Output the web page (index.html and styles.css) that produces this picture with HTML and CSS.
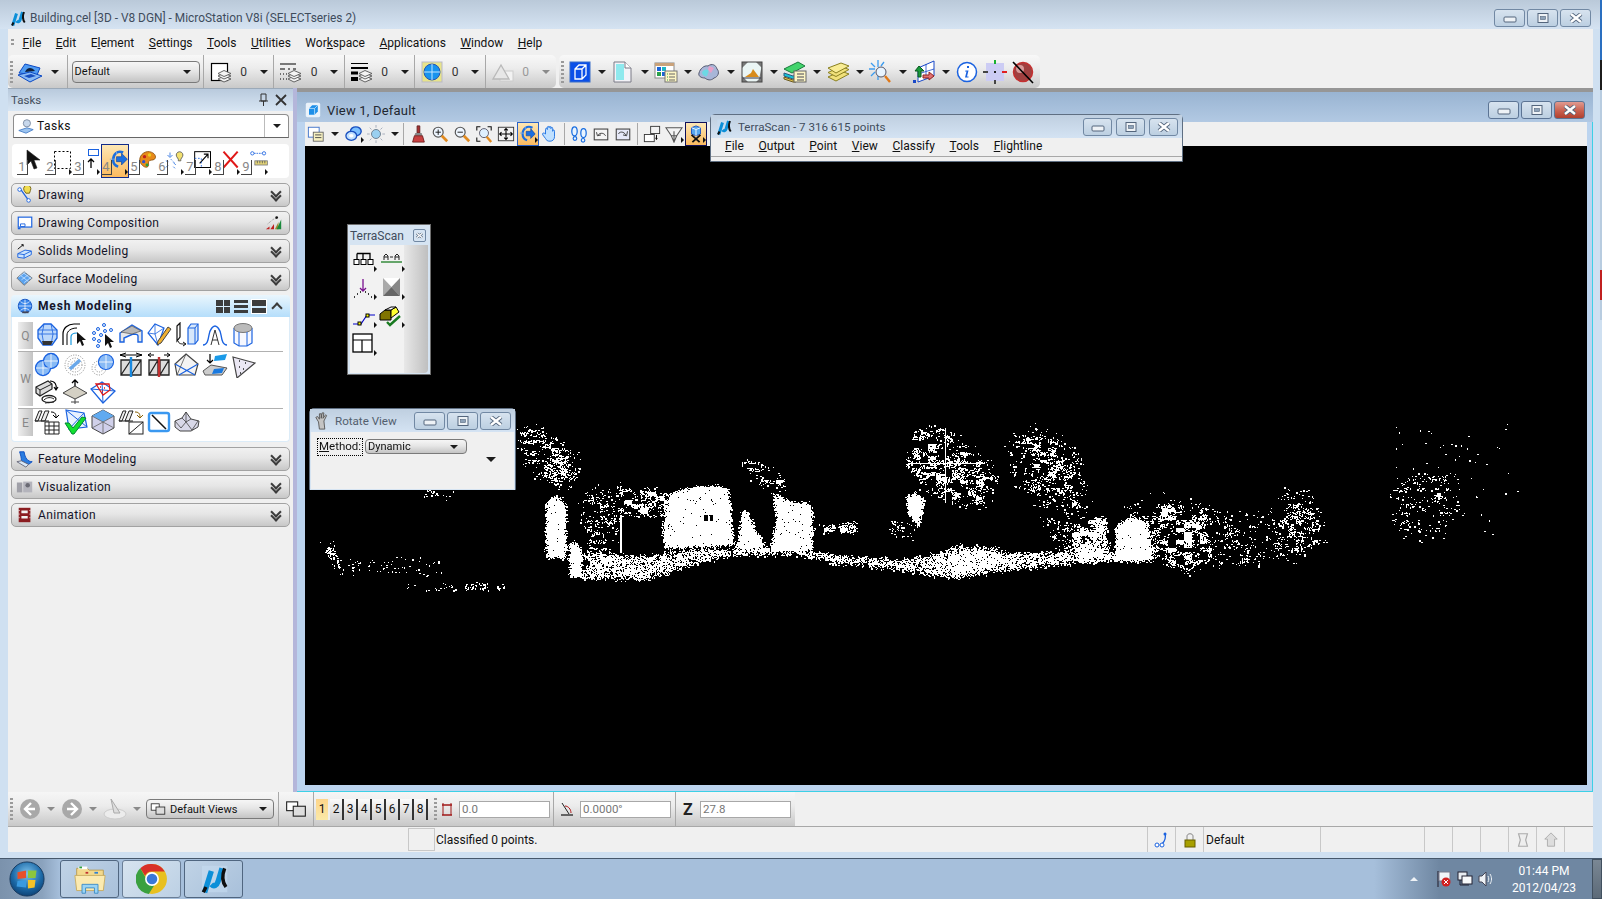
FILE: index.html
```html
<!DOCTYPE html>
<html>
<head>
	<meta charset="utf-8">
	<title>Building.cel [3D - V8 DGN] - MicroStation V8i (SELECTseries 2)</title>
	<link rel="stylesheet" href="styles.css">
</head>
<body>

<svg class="sprite" xmlns="http://www.w3.org/2000/svg">
	<!-- window buttons -->
	<symbol id="w-min" viewBox="0 0 16 10"><rect x="2" y="4" width="12" height="5" rx="1" fill="#eef2f6" stroke="#53657c"/></symbol>
	<symbol id="w-max" viewBox="0 0 16 10"><rect x="3" y="0.5" width="10" height="9" fill="#eef2f6" stroke="#53657c"/><rect x="5.5" y="3.5" width="5" height="3" fill="#8ea2b8" stroke="#53657c" stroke-width=".6"/></symbol>
	<symbol id="w-close" viewBox="0 0 16 10"><path d="M3 1l10 8M13 1L3 9" stroke="#53657c" stroke-width="4.2"/><path d="M3 1l10 8M13 1L3 9" stroke="#fff" stroke-width="2.4"/></symbol>

	<!-- logo -->
	<symbol id="logo" viewBox="0 0 24 24"><rect x="3" y="2" width="19" height="20" fill="#c8dff2" opacity=".55"/><path d="M5 22L10 6M10 16c2 2 4 1 5-2l3-10" fill="none" stroke="#0c8fd8" stroke-width="4"/><path d="M4 22l2-4M20 4c-2 5-2 10 1 14" fill="none" stroke="#101010" stroke-width="2.6"/></symbol>

	<!-- main toolbar -->
	<symbol id="model" viewBox="0 0 26 24"><path d="M2 13L8 4l15 4-3 7z" fill="#4f9bf2" stroke="#0b49c4"/><path d="M8 12c2-5 7-5 10-1z" fill="#10203a"/><path d="M1 15l12-3 12 4-12 6z" fill="#8abaf4" stroke="#0b49c4"/><path d="M7 16l7-2 5 2-7 2z" fill="#174fc0"/></symbol>
	<symbol id="sheets" viewBox="0 0 24 24"><g fill="#f4f4f4" stroke="#555" stroke-width=".9"><path d="M9 19l6-3 7 3-7 3z"/><path d="M9 16l6-3 7 3-7 3z"/><path d="M9 13.500l6-3 7 3-7 3z"/></g></symbol>
	<symbol id="lv-color" viewBox="0 0 24 24"><rect x="2.500" y="3.500" width="16" height="17" fill="#fff" stroke="#000" stroke-width="1.200"/><use href="#sheets"/></symbol>
	<symbol id="lv-style" viewBox="0 0 24 24"><path d="M1 4h16M1 9h5M9 9h2M14 9h3M1 14h1M4 14h1M7 14h1M1 19h1M4 19h1M7 19h1" stroke="#000" stroke-width="1.200"/><use href="#sheets"/></symbol>
	<symbol id="lv-weight" viewBox="0 0 24 24"><path d="M1 3.500h17" stroke="#000"/><path d="M1 8h17" stroke="#000" stroke-width="2"/><path d="M1 13h7" stroke="#000" stroke-width="3"/><path d="M1 19h7" stroke="#000" stroke-width="4"/><use href="#sheets"/></symbol>
	<symbol id="lv-globe" viewBox="0 0 24 24"><rect x="2" y="2" width="20" height="20" fill="#e8e48a" stroke="#b9b9c8"/><circle cx="12" cy="12" r="8" fill="#1793ee" stroke="#2a54b0"/><path d="M12 4v16M4 12h16" stroke="#bfe4ff"/></symbol>
	<symbol id="lv-tri" viewBox="0 0 24 24"><rect x="9" y="11" width="13" height="10" fill="#f2f2f2" stroke="#ccc"/><path d="M2 19L10 5l8 14z" fill="#e7e7e7" stroke="#b9b9b9" stroke-width="1.300"/></symbol>
	<symbol id="cube" viewBox="0 0 24 24"><rect x="2" y="2" width="20" height="20" fill="#0b4fe8" stroke="#3a6ec8"/><path d="M7 9l4-4h7v10l-4 4H7zM7 9h7v10M14 9l4-4" fill="none" stroke="#fff" stroke-width="1.300"/></symbol>
	<symbol id="doc" viewBox="0 0 24 24"><path d="M3 2h11l6 6v14H3z" fill="#f3f3f8" stroke="#7a7a86"/><path d="M5 4h8v16H5z" fill="#8fe9ee"/><path d="M14 2v6h6" fill="#fff" stroke="#7a7a86"/></symbol>
	<symbol id="table-win" viewBox="0 0 24 24"><rect x="1" y="3" width="19" height="15" fill="#fff" stroke="#888"/><rect x="1" y="3" width="19" height="3" fill="#c9a27a"/><g fill="#1a64d8"><rect x="3" y="7" width="4" height="4"/><rect x="3" y="12" width="4" height="4" fill="#2aa14a"/></g><rect x="8" y="7" width="4" height="4" fill="#20b6c6"/><rect x="8" y="12" width="4" height="4" fill="#1a64d8"/><rect x="11" y="11" width="12" height="11" fill="#fdf6c4" stroke="#777"/><path d="M13 14h1M13 17h1M13 20h1" stroke="#2aa14a"/><path d="M15 14h6M15 17h6M15 20h6" stroke="#666"/></symbol>
	<symbol id="blob" viewBox="0 0 24 24"><path d="M2 13c1-4 5-8 9-7 4-3 8-1 9 3 3 3 1 8-3 9-3 3-7 2-9 0-4 0-7-2-6-5z" fill="#a8b6d8" stroke="#565a70"/><path d="M5 12c2-3 5-3 7-2l-2 6c-2 1-5-1-5-4z" fill="#6cd8e4"/><path d="M12 6l5 2-3 5-3-3z" fill="#e8a0c8"/></symbol>
	<symbol id="mountain" viewBox="0 0 24 24"><rect x="2" y="2" width="20" height="20" fill="#777"/><path d="M2 2h20v2l-3 16-2 2H5L2 17z" fill="#eaf5f4"/><path d="M2 2h6L2 8zM22 2h-6l6 6zM2 22h6l-6-6zM22 22h-6l6-6z" fill="#777"/><path d="M5 17l6-4 2-4 6 8z" fill="#d88c1c"/><path d="M3 18h18" stroke="#334"/><rect x="2" y="2" width="20" height="20" fill="none" stroke="#444"/></symbol>
	<symbol id="layers-green" viewBox="0 0 24 24"><path d="M1 9L15 2l7 4-13 7z" fill="#42d46c" stroke="#1a7a3c"/><path d="M1 13l9 3 3-1v3l-3 1-9-3z" fill="#18c4d8" stroke="#2a5a80"/><path d="M1 17l9 3 3-1v3l-3 0-9-3z" fill="#e0c050" stroke="#6a5a20"/><rect x="11" y="11" width="12" height="11" fill="#fdf6c4" stroke="#666"/><path d="M14 14h7M14 17h7M14 20h7" stroke="#445"/></symbol>
	<symbol id="layers-yellow" viewBox="0 0 24 24"><g fill="#f0e07a" stroke="#8a8020"><path d="M2 17l13-6 8 3-13 7z"/><path d="M2 12.500l13-6 8 3-13 7z"/><path d="M2 8l13-5 8 3-13 7z" fill="#f8ec94"/></g></symbol>
	<symbol id="spark-lens" viewBox="0 0 24 24"><path d="M9 0v7M9 13v7M0 9h6M12 9h4M2 3l4 4M2 16l4-4M15 2l-3 4" stroke="#3c9cf0" stroke-width="1.300"/><circle cx="12" cy="12" r="5" fill="#e8f4ff" stroke="#556"/><path d="M16 16l5 6" stroke="#e07818" stroke-width="2.400"/></symbol>
	<symbol id="transform" viewBox="0 0 24 24"><path d="M6 8L22 1v15L6 22z" fill="#fff" stroke="#1848c8"/><path d="M14 4v15M6 14l16-5" stroke="#1848c8" stroke-width=".8"/><path d="M7 6l-4 5h3v6h3v-6h3z" fill="#1a9a3c" stroke="#0a5a20"/><path d="M11 15h6v-3l5 4-5 4v-2h-6z" fill="#e07070" stroke="#902020"/><rect x="1" y="20" width="3" height="3" fill="#1848c8"/></symbol>
	<symbol id="info" viewBox="0 0 24 24"><circle cx="12" cy="12" r="9.500" fill="#fff" stroke="#1a62e0" stroke-width="1.500"/><path d="M12 6h2v2h-2zM10.500 10.500h3l-1.500 6h1.500v1h-3.500l1.500-6h-1.500z" fill="#1a62e0"/></symbol>
	<symbol id="cross" viewBox="0 0 24 24"><rect x="3" y="3" width="18" height="18" fill="#ccccf4"/><path d="M12 0v4" stroke="#19b030" stroke-width="2"/><path d="M0 12h5" stroke="#444" stroke-width="2"/><path d="M19 12h5" stroke="#e02020" stroke-width="2"/><path d="M12 20v4" stroke="#444" stroke-width="2"/><rect x="11" y="11" width="2" height="2" fill="#222"/></symbol>
	<symbol id="nope" viewBox="0 0 24 24"><circle cx="12" cy="12" r="9.500" fill="#a04040"/><circle cx="9" cy="9" r="4" fill="#d89a9a"/><circle cx="12" cy="12" r="9.500" fill="none" stroke="#c43030" stroke-width="1.500"/><path d="M2 2l20 21" stroke="#000" stroke-width="1.600"/></symbol>

	<!-- view toolbar -->
	<symbol id="v-list" viewBox="0 0 20 20"><rect x="1.500" y="2.500" width="12" height="11" fill="#fff" stroke="#3a6ec8"/><rect x="7" y="8" width="11" height="10" fill="#f6f0c0" stroke="#666"/><path d="M9 11h7M9 14h7" stroke="#444"/></symbol>
	<symbol id="v-link" viewBox="0 0 20 20"><ellipse cx="12" cy="7" rx="6" ry="5" fill="#7cc0ff" stroke="#1a50c0" stroke-width="1.500"/><ellipse cx="7" cy="12" rx="6" ry="5" fill="#bfe0ff" stroke="#1a50c0" stroke-width="1.500"/><ellipse cx="7" cy="12" rx="2.500" ry="2" fill="#fff"/></symbol>
	<symbol id="v-sun" viewBox="0 0 20 20"><circle cx="10" cy="10" r="5" fill="#9ad0f0" stroke="#6a7a8a"/><path d="M10 0v3M10 17v3M0 10h3M17 10h3M3 3l2 2M15 15l2 2M17 3l-2 2M5 15l-2 2" stroke="#a0a8b8"/></symbol>
	<symbol id="v-brush" viewBox="0 0 20 20"><path d="M9 1h3v8H9z" fill="#a83030" stroke="#602020"/><path d="M7 9h7l1 3H6z" fill="#888"/><path d="M6 12h9l2 7H4z" fill="#c84040" stroke="#702020"/></symbol>
	<symbol id="v-in" viewBox="0 0 20 20"><circle cx="8" cy="8" r="5.500" fill="#eef6ff" stroke="#555" stroke-width="1.300"/><path d="M5 8h6M8 5v6" stroke="#111"/><path d="M12 12l6 6" stroke="#e08a20" stroke-width="3"/></symbol>
	<symbol id="v-out" viewBox="0 0 20 20"><circle cx="8" cy="8" r="5.500" fill="#eef6ff" stroke="#555" stroke-width="1.300"/><path d="M5 8h6" stroke="#111"/><path d="M12 12l6 6" stroke="#e08a20" stroke-width="3"/></symbol>
	<symbol id="v-window" viewBox="0 0 20 20"><path d="M2 6V2h4M14 2h4v4M2 14v4h4" fill="none" stroke="#111" stroke-width="1.200"/><circle cx="10" cy="9" r="5" fill="#dff0ff" stroke="#556"/><path d="M13 13l5 6" stroke="#e08a20" stroke-width="2.600"/></symbol>
	<symbol id="v-fit" viewBox="0 0 20 20"><rect x="1.500" y="2.500" width="17" height="15" fill="#f2f2f2" stroke="#333"/><path d="M10 4v12M3 10h14M8 6l2-2 2 2M8 14l2 2 2-2M5 8l-2 2 2 2M15 8l2 2-2 2" fill="none" stroke="#000" stroke-width="1.200"/></symbol>
	<symbol id="v-rotate" viewBox="0 0 20 20"><path d="M15 3C9 0 4 4 4 10c0 3 2 6 5 7" fill="none" stroke="#1a6ee0" stroke-width="2.400"/><path d="M8 7h5V4l5 6-5 5v-3H8z" fill="#1a6ee0" stroke="#0a3a90" stroke-width=".6"/><path d="M1 9h5M7 2v3" stroke="#7aa8e8"/></symbol>
	<symbol id="v-hand" viewBox="0 0 20 20"><path d="M5 10V5c0-2 2-2 2 0V3c0-2 2-2 2 0v0c0-2 2-2 2 0v1c0-2 2-2 2 0v3c0-2 2-2 2 0v6c0 3-2 5-5 5s-4-1-5-3l-3-4c-1-2 1-3 3-1z" fill="#bfe0ff" stroke="#1a6ee0"/></symbol>
	<symbol id="v-feet" viewBox="0 0 20 20"><ellipse cx="5" cy="7" rx="3" ry="5" fill="#e8f4ff" stroke="#1a6ee0" stroke-width="1.400"/><circle cx="5.500" cy="15" r="2" fill="#e8f4ff" stroke="#1a6ee0" stroke-width="1.300"/><ellipse cx="15" cy="9" rx="3" ry="5" fill="#e8f4ff" stroke="#1a6ee0" stroke-width="1.400"/><circle cx="14.500" cy="17" r="2" fill="#e8f4ff" stroke="#1a6ee0" stroke-width="1.300"/></symbol>
	<symbol id="v-prev" viewBox="0 0 20 20"><rect x="2.500" y="4.500" width="15" height="12" fill="#f4f4f4" stroke="#444" stroke-width="1.200"/><path d="M15 12c-1-3-6-4-8-1M5 8l1 4 4-1" fill="none" stroke="#333"/></symbol>
	<symbol id="v-next" viewBox="0 0 20 20"><rect x="2.500" y="4.500" width="15" height="12" fill="#e6e9f8" stroke="#444" stroke-width="1.200"/><path d="M5 10c1-3 6-3 8 1M15 7l-1 5-4-1" fill="none" stroke="#333"/></symbol>
	<symbol id="v-copy" viewBox="0 0 20 20"><rect x="8.500" y="1.500" width="10" height="8" fill="#f2f2f2" stroke="#333"/><rect x="1.500" y="10.500" width="11" height="8" fill="#fff" stroke="#333"/><path d="M15 11v5l-1-1M15 16l1-1" stroke="#000"/></symbol>
	<symbol id="v-clip" viewBox="0 0 20 20"><path d="M1 3h18l-6 9H7z" fill="#f4f4f4" stroke="#555" stroke-width="1.200"/><path d="M7 12l3 7 3-7M10 7v12" fill="none" stroke="#555" stroke-width="1.200"/></symbol>
	<symbol id="v-scan" viewBox="0 0 20 20"><path d="M5 3l5-2 5 2v7l-5 2-5-2z" fill="#58a8ee" stroke="#1a4ec0"/><path d="M5 3l5 2 5-2M10 5v7" stroke="#fff" fill="none"/><path d="M5 11l9 8M15 11l-9 8" stroke="#111" stroke-width="2"/></symbol>

	<!-- tasks row -->
	<symbol id="t-arrow" viewBox="0 0 20 24"><path d="M2 2v15l4-4 3 8 3-1-3-8h6z" fill="#111" stroke="#222" stroke-width=".6"/></symbol>
	<symbol id="t-fence" viewBox="0 0 20 24"><rect x="1.500" y="3.500" width="16" height="17" fill="none" stroke="#000" stroke-dasharray="2 2"/></symbol>
	<symbol id="t-select" viewBox="0 0 20 24"><rect x="7.500" y="1.500" width="10" height="6" fill="#fff" stroke="#1a62e0"/><path d="M10 20v-8M7 14l3-3 3 3" fill="none" stroke="#000" stroke-width="1.300"/></symbol>
	<symbol id="t-rotate" viewBox="0 0 24 24"><path d="M17 3C10 0 5 5 5 12c0 4 3 7 6 8" fill="none" stroke="#1a6ee0" stroke-width="3"/><path d="M9 8h6V4l7 7-7 7v-4H9z" fill="#1a6ee0" stroke="#0a3a90" stroke-width=".7"/><path d="M1 11h7M9 2v4" stroke="#7aa8e8"/></symbol>
	<symbol id="t-palette" viewBox="0 0 24 24"><path d="M4 15C1 8 8 1 15 2c6 1 9 6 6 9-2 2-6 0-7 3-1 2 1 4-1 6-3 2-7-1-9-5z" fill="#e88a1a" stroke="#8a5010"/><circle cx="9" cy="8" r="2" fill="#c02020"/><circle cx="15" cy="6" r="2" fill="#e8d020"/><circle cx="8" cy="14" r="2" fill="#3050d0"/><circle cx="12" cy="18" r="1.700" fill="#20a040"/></symbol>
	<symbol id="t-bulb" viewBox="0 0 24 24"><path d="M14 8a4 4 0 1 1 7 0l-2 3v2h-3v-2z" fill="#f2e070" stroke="#555"/><path d="M6 3v5M3 6l3 3M9 6L6 9M4 14l-3-1M10 15l3 3M4 18l-3 3M10 20l2 2" stroke="#2a70e0"/><path d="M7 11l5 5" stroke="#2a70e0" stroke-dasharray="2 2"/></symbol>
	<symbol id="t-scale" viewBox="0 0 24 24"><rect x="2" y="2" width="19" height="19" fill="none" stroke="#000" stroke-width="1.200"/><path d="M8 16L18 5M13 5h5v5" fill="none" stroke="#000" stroke-width="1.400"/><path d="M2 10h8v11" fill="none" stroke="#1a62e0" stroke-dasharray="2 2"/></symbol>
	<symbol id="t-del" viewBox="0 0 24 24"><path d="M3 2l17 19M20 2L3 21" stroke="#e01818" stroke-width="2.400"/></symbol>
	<symbol id="t-measure" viewBox="0 0 24 24"><circle cx="4" cy="4" r="2" fill="#fff" stroke="#1a62e0"/><circle cx="18" cy="4" r="2" fill="#fff" stroke="#1a62e0"/><path d="M6 4h10" stroke="#1a62e0" stroke-dasharray="2 1"/><rect x="7" y="13" width="15" height="5" fill="#e8d878" stroke="#777"/><path d="M10 13v3M13 13v3M16 13v3M19 13v3" stroke="#555"/></symbol>

	<!-- sections -->
	<symbol id="s-draw" viewBox="0 0 20 20"><path d="M4 2l10 14" stroke="#1a62e0" stroke-width="1.400"/><circle cx="4" cy="4" r="2" fill="#fff" stroke="#1a62e0"/><circle cx="14" cy="16" r="2" fill="#fff" stroke="#1a62e0"/><path d="M9 5a4 4 0 1 1 7 0l-1 3h-4z" fill="#f0dc50" stroke="#706010"/></symbol>
	<symbol id="s-comp" viewBox="0 0 20 20"><rect x="2.500" y="3.500" width="15" height="11" fill="#fff" stroke="#1a62e0" stroke-width="1.300"/><path d="M2 15h3v2H2z" fill="#1a62e0"/><path d="M5 11h5v3H5z" fill="none" stroke="#1a62e0"/></symbol>
	<symbol id="s-solid" viewBox="0 0 20 20"><path d="M2 13l8-4 7 1v4l-8 4-7-1z" fill="#cde4fc" stroke="#1a62e0"/><path d="M2 13l7 1v4M9 14l8-4" stroke="#1a62e0" fill="none"/><path d="M2 8l6-5M6 3h2v2" stroke="#000" fill="none"/></symbol>
	<symbol id="s-surf" viewBox="0 0 20 20"><path d="M1 9L9 2l9 7-9 8z" fill="#5aa2ee" stroke="#777"/><path d="M5 6l9 7M8 3l9 7M3 8l8-6M6 11l8-6M9 14l8-6" stroke="#cfe6ff" stroke-width=".8"/></symbol>
	<symbol id="s-mesh" viewBox="0 0 20 20"><circle cx="10" cy="10" r="7.500" fill="#3a86ea" stroke="#0a4cc0"/><path d="M3 10h14M10 3v14M5 5c3 3 7 3 10 0M5 15c3-3 7-3 10 0" fill="none" stroke="#fff" stroke-width=".8"/><rect x="7" y="16" width="7" height="2" fill="#445"/></symbol>
	<symbol id="s-feature" viewBox="0 0 20 20"><path d="M4 2c1 3 2 7 2 10l8 4 4-3c-5 0-8-4-9-11z" fill="#2a7ce0" stroke="#0a4cc0"/><path d="M1 13l5-1 8 4-3 3z" fill="#d8e8f8" stroke="#667"/></symbol>
	<symbol id="s-viz" viewBox="0 0 20 20"><rect x="1" y="5" width="6" height="11" fill="#a0a0a8"/><rect x="8" y="4" width="10" height="12" fill="#b4b4bc"/><circle cx="13" cy="8" r="2.500" fill="#6a6a74"/></symbol>
	<symbol id="s-anim" viewBox="0 0 20 20"><rect x="3" y="2" width="13" height="16" fill="#8a1c20"/><path d="M6 5h7v3H6zM6 11h7v3H6z" fill="#f0f0f0"/><path d="M3 5h1M3 9h1M3 13h1M15 5h1M15 9h1M15 13h1" stroke="#fff"/></symbol>
	<symbol id="s-chart" viewBox="0 0 20 20"><path d="M1 17l4-3v3zM6 17l4-6v6z" fill="#c02020"/><path d="M11 17l4-8v8z" fill="#9a8a30"/><path d="M13 17l5-11v11z" fill="#1a8a3c"/><path d="M3 11l6-5 3-1" stroke="#888" stroke-dasharray="1 1" fill="none"/><circle cx="13" cy="4" r="1.500" fill="#111"/></symbol>

	<!-- mesh modeling -->
	<symbol id="m-sphere" viewBox="0 0 26 26"><path d="M4 8l6-6h7l6 6v8l-5 7H9l-5-7z" fill="#bcd8fa" stroke="#1a62e0" stroke-width="1.300"/><path d="M4 12h19M10 2l-2 10 2 11M17 2l2 10-2 11M4 8h19" fill="none" stroke="#1a62e0" stroke-width=".8"/><path d="M8 19h11l-2 4H9z" fill="#333"/></symbol>
	<symbol id="m-curves" viewBox="0 0 26 26"><path d="M1 23V12C1 6 6 2 12 2h6" fill="none" stroke="#000" stroke-width="1.200"/><path d="M5 23V13c0-4 4-7 10-7" fill="none" stroke="#000"/><path d="M9 23v-8c0-2 2-4 6-4" fill="none" stroke="#1a9adf" stroke-width="1.200"/><path d="M15 10v12l3-3 2 5 2-1-2-5h4z" fill="#111"/></symbol>
	<symbol id="m-points" viewBox="0 0 26 26"><g fill="#eaf4ff" stroke="#1a62e0"><circle cx="14" cy="3" r="1.500"/><circle cx="8" cy="7" r="1.500"/><circle cx="15" cy="9" r="1.500"/><circle cx="21" cy="8" r="1.500"/><circle cx="4" cy="11" r="1.500"/><circle cx="11" cy="13" r="1.500"/><circle cx="4" cy="17" r="1.500"/><circle cx="9" cy="19" r="1.500"/><circle cx="8" cy="24" r="1.500"/></g><path d="M15 12v12l3-3 2 5 2-1-2-5h4z" fill="#111"/></symbol>
	<symbol id="m-tunnel" viewBox="0 0 26 26"><path d="M2 20V11L14 3l10 6v11h-4v-6c0-2-3-2-5-2L6 16v4z" fill="#e8e8e8" stroke="#1a62e0" stroke-width="1.400"/><path d="M3 10l11-6 9 5-9 3z" fill="#b9b9b9" stroke="#555" stroke-width=".7"/></symbol>
	<symbol id="m-pencil" viewBox="0 0 26 26"><path d="M2 11L9 2l9 4-6 17z" fill="#fff" stroke="#1a62e0" stroke-width="1.200"/><path d="M9 2v10l3 11M2 11l7 1 9-6" fill="none" stroke="#1a62e0" stroke-width=".8"/><path d="M22 5l3 2-10 14-4 2 1-4z" fill="#f0b030" stroke="#444"/></symbol>
	<symbol id="m-extrude" viewBox="0 0 26 26"><path d="M3 4l3-3v14l-3 4z" fill="#fff" stroke="#111" stroke-width="1.200"/><path d="M14 6l3-4h7v16l-3 4h-7z" fill="#d8e8fb" stroke="#1a62e0" stroke-width="1.200"/><path d="M14 6h7v16M21 6l3-4" fill="none" stroke="#1a62e0"/><path d="M4 19c1 3 3 3 7 3M9 20l3 2-3 2" fill="none" stroke="#111"/></symbol>
	<symbol id="m-arch" viewBox="0 0 26 26"><path d="M1 23c4 0 5-4 6-10 1-6 4-9 6-9s5 3 6 9c1 6 2 10 6 10" fill="none" stroke="#1a62e0" stroke-width="1.400"/><path d="M9 23l4-15 4 15M10 18h6" fill="none" stroke="#333"/></symbol>
	<symbol id="m-cyl" viewBox="0 0 26 26"><path d="M4 6v15l5 3h8l5-3V6" fill="#f6f8ff" stroke="#1a62e0" stroke-width="1.200"/><ellipse cx="13" cy="6" rx="9" ry="4.500" fill="#bbb" stroke="#777"/><path d="M9 10v14M17 10v14" stroke="#1a62e0"/></symbol>
	<symbol id="m-spheres" viewBox="0 0 26 26"><circle cx="9" cy="16" r="7.500" fill="#88baf5" stroke="#1a62e0" stroke-width="1.300"/><circle cx="17" cy="9" r="7.500" fill="#88baf5" stroke="#1a62e0" stroke-width="1.300"/><path d="M2 16h14M9 9v14M10 9h14M17 2v14" stroke="#fff" stroke-width=".8"/></symbol>
	<symbol id="m-cloud" viewBox="0 0 26 26"><g fill="none" stroke="#888" stroke-dasharray="1 1.500"><circle cx="13" cy="13" r="10"/><circle cx="13" cy="13" r="7"/><circle cx="13" cy="13" r="4"/></g><path d="M8 17L18 8" stroke="#6aa8ea" stroke-width="3.400"/></symbol>
	<symbol id="m-cloud2" viewBox="0 0 26 26"><g fill="none" stroke="#888" stroke-dasharray="1 1.500"><circle cx="9" cy="16" r="7"/><circle cx="9" cy="16" r="4"/></g><circle cx="16" cy="10" r="7.500" fill="#88baf5" stroke="#1a62e0" stroke-width="1.200"/><path d="M9 10h14M16 3v14" stroke="#fff" stroke-width=".8"/></symbol>
	<symbol id="m-split" viewBox="0 0 26 26"><path d="M2 3h22M8 1L2 3l6 2M18 1l6 2-6 2" fill="none" stroke="#000"/><path d="M3 8h20v15H3zM3 23L13 8M13 23L23 8" fill="#ddd" stroke="#222" stroke-width="1.300"/><path d="M13 5v20" stroke="#1a8ae0" stroke-width="2.400"/></symbol>
	<symbol id="m-split2" viewBox="0 0 26 26"><path d="M8 3H2M5 1L2 3l3 2M18 3h6M21 1l3 2-3 2" fill="none" stroke="#000"/><path d="M3 8h9v15H3zM14 8h9v15h-9zM3 23L12 8M14 23L23 8" fill="#ddd" stroke="#222" stroke-width="1.300"/><path d="M13 5v20" stroke="#c03030" stroke-width="2.400"/></symbol>
	<symbol id="m-diam" viewBox="0 0 26 26"><path d="M12 2l12 10-3 11H3L1 12z" fill="#f4f4f4" stroke="#444" stroke-width="1.200"/><path d="M1 12l20 11M24 12L5 23" stroke="#1a62e0" stroke-width="1.200"/><path d="M12 2L3 23" stroke="#444" stroke-width=".7"/></symbol>
	<symbol id="m-drop" viewBox="0 0 26 26"><path d="M8 2v9M5 8l3 3 3-3" fill="none" stroke="#000" stroke-width="1.200"/><path d="M13 4l12-2-2 6-11 1z" fill="#1a9ae8"/><path d="M1 19l8-6 16 3-5 7H3z" fill="#ccc" stroke="#555"/><path d="M12 17l10-1-2 5-10 1z" fill="#1a7ae0"/></symbol>
	<symbol id="m-tri" viewBox="0 0 26 26"><path d="M3 5l22 6-18 15z" fill="#ebe8f4" stroke="#444" stroke-width="1.200"/><path d="M9 9h1M15 11h1M9 15h1M13 17h1M10 21h1" stroke="#222" stroke-width="1.500"/></symbol>
	<symbol id="m-box" viewBox="0 0 26 26"><path d="M2 8l12-6 4 3v5L6 17l-4-3z" fill="#ddd" stroke="#222" stroke-width="1.200"/><path d="M2 8l4 3v6M6 11l12-6" fill="none" stroke="#222"/><path d="M16 2c5 0 7 4 6 8M20 8l2 3 2-3" fill="none" stroke="#000" stroke-width="1.200"/><ellipse cx="15" cy="20" rx="7" ry="3.500" fill="#fff" stroke="#222" stroke-width="1.300"/><path d="M10 21c3-3 7-3 10-1M11 24l9-1" fill="none" stroke="#222"/></symbol>
	<symbol id="m-plane" viewBox="0 0 26 26"><path d="M13 1v13M10 4l3-3 3 3" fill="none" stroke="#000" stroke-width="1.300"/><path d="M1 14l12-7 12 7-12 6z" fill="#d4d0c4" stroke="#444"/><path d="M13 20v5M9 23h8" stroke="#444"/></symbol>
	<symbol id="m-red" viewBox="0 0 26 26"><path d="M1 10L12 3l13 9-12 12z" fill="#fff" stroke="#1a62e0" stroke-width="1.300"/><path d="M1 10l24 2M12 3l1 21" stroke="#1a62e0"/><path d="M6 5h13l1 6-7 5z" fill="none" stroke="#e01818" stroke-width="1.300"/><path d="M10 8h1M14 9h1M12 12h1" stroke="#e01818" stroke-width="1.500"/></symbol>
	<symbol id="m-to-grid" viewBox="0 0 26 26"><path d="M1 12L5 2h3l-4 10zM7 12l4-10h4l-4 10zM1 12h14" fill="#eee" stroke="#222"/><path d="M17 3c3 0 5 1 5 5M19 6l3 3 3-3" fill="none" stroke="#000"/><path d="M11 13h14v12H11zM11 17h14M11 21h14M15 13v12M20 13v12" fill="none" stroke="#222"/></symbol>
	<symbol id="m-check" viewBox="0 0 26 26"><path d="M4 1l18 3 3 14-18 2z" fill="#e8f2ff" stroke="#1a62e0" stroke-width="1.200"/><path d="M4 1l21 17M22 4L7 20" stroke="#1a62e0"/><path d="M3 14l4 0 4 5 9-11 4 1-12 16h-2z" fill="#12e030" stroke="#083"/></symbol>
	<symbol id="m-cube" viewBox="0 0 26 26"><path d="M13 1l11 6v12l-11 6-11-6V7z" fill="#d0d0ea" stroke="#444"/><path d="M13 1l11 6-11 6-11-6z" fill="#60aaf0"/><path d="M2 7l11 6 11-6M13 13v12M2 19l11-6 11 6" fill="none" stroke="#666" stroke-width=".8"/></symbol>
	<symbol id="m-to-tri" viewBox="0 0 26 26"><path d="M1 12L5 2h3l-4 10zM7 12l4-10h4l-4 10zM1 12h14" fill="#eee" stroke="#222"/><path d="M17 3c3 0 5 1 5 5M19 6l3 3 3-3" fill="none" stroke="#8a6000"/><rect x="11" y="13" width="14" height="12" fill="#fff" stroke="#222"/><path d="M11 25l14-12" stroke="#222"/></symbol>
	<symbol id="m-diag" viewBox="0 0 26 26"><rect x="3" y="4" width="20" height="18" rx="2" fill="#fff" stroke="#3a98f0" stroke-width="2.400"/><path d="M6 6l14 14" stroke="#111" stroke-width="1.500"/></symbol>
	<symbol id="m-bowl" viewBox="0 0 26 26"><path d="M1 12l7-3 4-6 5 7 8 2-1 6-7 4H6l-5-4z" fill="#d8d8e8" stroke="#444"/><path d="M8 9l4 4 5-3M1 12l6 7 5-6 6 8 6-9M12 3v10" fill="none" stroke="#444" stroke-width=".8"/></symbol>

	<!-- bottom bar -->
	<symbol id="b-back" viewBox="0 0 22 22"><circle cx="11" cy="11" r="10" fill="#a8a8a8"/><path d="M12 5l-6 6 6 6M7 11h9" fill="none" stroke="#fff" stroke-width="2.400"/></symbol>
	<symbol id="b-next" viewBox="0 0 22 22"><circle cx="11" cy="11" r="10" fill="#a8a8a8"/><path d="M10 5l6 6-6 6M15 11H6" fill="none" stroke="#fff" stroke-width="2.400"/></symbol>
	<symbol id="b-dial" viewBox="0 0 24 24"><ellipse cx="12" cy="17" rx="11" ry="5" fill="#ececec" stroke="#ccc"/><path d="M8 2l3 14 6 0z" fill="#ddd" stroke="#aaa"/></symbol>
	<symbol id="b-views" viewBox="0 0 20 16"><rect x="1.500" y="1.500" width="10" height="8" fill="#fff" stroke="#222"/><rect x="7.500" y="5.500" width="11" height="9" fill="#ddd" stroke="#222"/></symbol>
	<symbol id="b-cal" viewBox="0 0 14 14"><path d="M2 3h10M2 13h10" stroke="#a01818" stroke-width="1.600"/><path d="M3 1v12M11 1v12" stroke="#a01818"/></symbol>
	<symbol id="b-angle" viewBox="0 0 14 14"><path d="M2 1l7 11" stroke="#222"/><path d="M1 13h12" stroke="#222" stroke-width="1.300"/><path d="M5 4c3 0 6 3 6 7" fill="none" stroke="#b01818"/></symbol>
	<symbol id="st-snap" viewBox="0 0 16 16"><path d="M11 1c1 4 0 8-3 11" fill="none" stroke="#1a62e0" stroke-width="1.300"/><circle cx="11" cy="2" r="1.500" fill="#1a62e0"/><circle cx="3" cy="13" r="2" fill="#fff" stroke="#1a62e0"/><circle cx="8" cy="13" r="2" fill="#fff" stroke="#1a62e0"/></symbol>
	<symbol id="st-lock" viewBox="0 0 16 16"><path d="M5 8V4c0-3 6-3 6 0v4" fill="none" stroke="#888"/><rect x="3" y="8" width="10" height="7" fill="#a8a000" stroke="#665f00"/></symbol>
	<symbol id="st-scroll" viewBox="0 0 16 18"><path d="M3 2h10l-2 7 2 7H3l2-7z" fill="#eee" stroke="#aaa" stroke-width="1.300"/></symbol>
	<symbol id="st-home" viewBox="0 0 16 18"><path d="M8 1L1 8h3v8h8V8h3z" fill="#ddd" stroke="#aaa"/></symbol>

	<!-- terrascan -->
	<symbol id="ts-tree" viewBox="0 0 24 24"><path d="M6 5.500h13v6M12 5.500v6M6 5.500v6" fill="none" stroke="#000" stroke-width="1.300"/><rect x="3" y="11.500" width="5" height="5" fill="#fff" stroke="#000"/><rect x="10" y="11.500" width="5" height="5" fill="#fff" stroke="#000"/><rect x="17" y="11.500" width="5" height="5" fill="#fff" stroke="#000"/></symbol>
	<symbol id="ts-aa" viewBox="0 0 24 24"><path d="M2 14h21" stroke="#187a20" stroke-width="1.300"/><path d="M5 12V8l2-2 2 2v4M5 9h4M11 9h3M16 12V8l2-2 2 2v4M16 9h4" fill="none" stroke="#222"/></symbol>
	<symbol id="ts-down" viewBox="0 0 24 24"><path d="M12 3v11M9 12l3 3 3-3" fill="none" stroke="#7a1090" stroke-width="1.300"/><path d="M3 21h1M6 18h1M9 16h1M14 16h1M17 18h1M20 21h1" stroke="#000" stroke-width="1.300"/></symbol>
	<symbol id="ts-bow" viewBox="0 0 24 24"><path d="M4 2h17L12.500 11z" fill="#fff"/><path d="M4 2l8.500 9L4 20z" fill="#aaa"/><path d="M21 2l-8.500 9L21 20z" fill="#888"/><path d="M4 20l8.500-9L21 20z" fill="#666"/></symbol>
	<symbol id="ts-line" viewBox="0 0 24 24"><path d="M2 20h8l6-9h8" fill="none" stroke="#0000c8" stroke-width="1.200"/><rect x="7" y="18" width="3" height="3" fill="#ff0" stroke="#000"/><rect x="15" y="10" width="3" height="3" fill="#ff0" stroke="#000"/></symbol>
	<symbol id="ts-block" viewBox="0 0 24 24"><path d="M1 10l5-4h6v10H1z" fill="#807400" stroke="#000"/><path d="M12 6l5-3 3 5-8 6z" fill="#ffff30" stroke="#000"/><path d="M6 6l6-3 5 0-5 3z" fill="#fff" stroke="#000"/><path d="M8 18l3 3 10-9" fill="none" stroke="#187a20" stroke-width="2.400"/></symbol>
	<symbol id="ts-table" viewBox="0 0 24 24"><rect x="2" y="2" width="19" height="18" fill="#fff" stroke="#000" stroke-width="1.300"/><path d="M2 8h19M11 8v12" stroke="#000" stroke-width="1.200"/></symbol>

	<!-- taskbar -->
	<symbol id="x-folder" viewBox="0 0 36 34"><path d="M3 5h12l2 2h16v22H3z" fill="#f3d98c" stroke="#b79a50"/><path d="M5 3h10v3H5z" fill="#fff"/><rect x="6" y="3" width="3" height="2" fill="#30a040"/><rect x="13" y="9" width="3" height="2" fill="#c03030"/><rect x="23" y="9" width="4" height="2" fill="#3080d0"/><path d="M1 13h34l-2 17H3z" fill="#fbeab0" stroke="#c8ab60"/><path d="M9 33V23h18v10h-4v-6H13v6z" fill="#9ad4f4" stroke="#3a8ac4"/></symbol>
	<symbol id="x-chrome" viewBox="0 0 30 30"><circle cx="15" cy="15" r="14" fill="#e8c020"/><path d="M15 1a14 14 0 0 1 12 7H15a7 7 0 0 0-6.500 4L4 5A14 14 0 0 1 15 1z" fill="#d83028"/><path d="M4 5l7 12a7 7 0 0 0 6 4l-5 8A14 14 0 0 1 4 5z" fill="#3aa040"/><circle cx="15" cy="15" r="6.500" fill="#fff"/><circle cx="15" cy="15" r="5" fill="#3a78d8"/></symbol>
	<symbol id="x-flag" viewBox="0 0 16 18"><path d="M2 1v16" stroke="#334" stroke-width="1.300"/><path d="M3 2h11v9H3z" fill="#f0f4f8" stroke="#778"/><circle cx="10" cy="12" r="4.500" fill="#d02020"/><path d="M8 10l4 4M12 10l-4 4" stroke="#fff"/></symbol>
	<symbol id="x-net" viewBox="0 0 16 18"><rect x="1" y="2" width="9" height="8" fill="#e8edf2" stroke="#223"/><rect x="5" y="6" width="10" height="8" fill="#f8fafc" stroke="#223"/><path d="M3 10v5h9" stroke="#223" fill="none"/></symbol>
	<symbol id="x-sound" viewBox="0 0 16 18"><path d="M1 6h3l4-4v14l-4-4H1z" fill="#eef2f6" stroke="#445"/><path d="M10 6c1 2 1 4 0 6M12 4c2 3 2 7 0 10" fill="none" stroke="#eef2f6"/></symbol>
	<symbol id="x-hand" viewBox="0 0 20 20"><path d="M6 19l-1-8-3-5 2-1 2 3V2h2v5l1-6h2l-1 6 3-4 1 1-3 6 1 9z" fill="#c4c4c4" stroke="#555"/></symbol>
</svg>

<div class="app">
	<header class="titlebar">
		<svg class="title-logo"><use href="#logo"/></svg>
		<span>Building.cel [3D - V8 DGN] - MicroStation V8i (SELECTseries 2)</span>
		<div class="winbtns">
			<button class="wbtn"><svg><use href="#w-min"/></svg></button>
			<button class="wbtn"><svg><use href="#w-max"/></svg></button>
			<button class="wbtn"><svg><use href="#w-close"/></svg></button>
		</div>
	</header>

	<nav class="menubar">
		<i class="grip menu-grip"></i>
		<a><u>F</u>ile</a><a><u>E</u>dit</a><a>E<u>l</u>ement</a><a><u>S</u>ettings</a><a><u>T</u>ools</a><a><u>U</u>tilities</a><a>Wor<u>k</u>space</a><a><u>A</u>pplications</a><a><u>W</u>indow</a><a><u>H</u>elp</a>
	</nav>

	<div class="toolrow">
		<div class="toolbar tb-attrs">
			<i class="grip"></i>
			<div class="attr-first"><svg class="ic26"><use href="#model"/></svg><b class="arrow"></b></div>
			<div class="attr-combo"><div class="combo">Default<b class="arrow"></b></div></div>
			<div class="attr"><svg class="ic24"><use href="#lv-color"/></svg><span>0</span><b class="arrow"></b></div>
			<div class="attr"><svg class="ic24"><use href="#lv-style"/></svg><span>0</span><b class="arrow"></b></div>
			<div class="attr"><svg class="ic24"><use href="#lv-weight"/></svg><span>0</span><b class="arrow"></b></div>
			<div class="attr"><svg class="ic24"><use href="#lv-globe"/></svg><span>0</span><b class="arrow"></b></div>
			<div class="attr attr-off"><svg class="ic24"><use href="#lv-tri"/></svg><span>0</span><b class="arrow"></b></div>
		</div>
		<div class="toolbar tb-tools">
			<i class="grip"></i>
			<div class="slot"><svg class="ic24"><use href="#cube"/></svg><b class="arrow"></b></div>
			<div class="slot"><svg class="ic24"><use href="#doc"/></svg><b class="arrow"></b></div>
			<div class="slot"><svg class="ic24"><use href="#table-win"/></svg><b class="arrow"></b></div>
			<div class="slot"><svg class="ic24"><use href="#blob"/></svg><b class="arrow"></b></div>
			<div class="slot"><svg class="ic24"><use href="#mountain"/></svg><b class="arrow"></b></div>
			<div class="slot"><svg class="ic24"><use href="#layers-green"/></svg><b class="arrow"></b></div>
			<div class="slot"><svg class="ic24"><use href="#layers-yellow"/></svg><b class="arrow"></b></div>
			<div class="slot"><svg class="ic24"><use href="#spark-lens"/></svg><b class="arrow"></b></div>
			<div class="slot"><svg class="ic24"><use href="#transform"/></svg><b class="arrow"></b></div>
			<svg class="ic24 tail"><use href="#info"/></svg>
			<svg class="ic24 tail"><use href="#cross"/></svg>
			<svg class="ic24 tail"><use href="#nope"/></svg>
		</div>
	</div>

	<div class="workspace">
		<aside class="tasks">
			<div class="tasks-head">
				<span>Tasks</span>
				<svg class="pin" viewBox="0 0 12 14"><path d="M4 1h5v7H4zM2 8h9M6.500 8v5" fill="none" stroke="#333"/></svg>
				<svg class="pin" viewBox="0 0 14 14"><path d="M2 2l10 10M12 2L2 12" stroke="#333" stroke-width="1.800"/></svg>
			</div>
			<div class="tasks-combo">
				<svg class="ic18" viewBox="0 0 20 20"><path d="M2 15l9-3 7 2-8 4z" fill="#9cc4f0" stroke="#4a80c8"/><circle cx="11" cy="7" r="4" fill="#c8d8ec" stroke="#7a8aa0"/></svg>
				<span>Tasks</span>
				<b class="combo-drop"><b class="arrow"></b></b>
			</div>
			<div class="task-row">
				<div class="task"><svg><use href="#t-arrow"/></svg><em>1</em></div>
				<div class="task more"><svg><use href="#t-fence"/></svg><em>2</em></div>
				<div class="task more"><svg><use href="#t-select"/></svg><em>3</em></div>
				<div class="task more on"><svg><use href="#t-rotate"/></svg><em>4</em></div>
				<div class="task"><svg><use href="#t-palette"/></svg><em>5</em></div>
				<div class="task more"><svg><use href="#t-bulb"/></svg><em>6</em></div>
				<div class="task more"><svg><use href="#t-scale"/></svg><em>7</em></div>
				<div class="task more"><svg><use href="#t-del"/></svg><em>8</em></div>
				<div class="task more"><svg><use href="#t-measure"/></svg><em>9</em></div>
			</div>

			<div class="section"><svg><use href="#s-draw"/></svg><span>Drawing</span><i class="chev"></i></div>
			<div class="section"><svg><use href="#s-comp"/></svg><span>Drawing Composition</span><svg class="sec-chart"><use href="#s-chart"/></svg></div>
			<div class="section"><svg><use href="#s-solid"/></svg><span>Solids Modeling</span><i class="chev"></i></div>
			<div class="section"><svg><use href="#s-surf"/></svg><span>Surface Modeling</span><i class="chev"></i></div>
			<div class="section open">
				<svg><use href="#s-mesh"/></svg><span>Mesh Modeling</span>
				<div class="modes">
					<i class="mode-grid"></i><i class="mode-list"></i><i class="mode-big"></i>
				</div>
				<i class="chev up"></i>
			</div>
			<div class="mesh-card">
				<div class="mesh-group">
					<span class="key">Q</span>
					<div class="mesh-icons">
						<svg><use href="#m-sphere"/></svg><svg><use href="#m-curves"/></svg><svg><use href="#m-points"/></svg><svg><use href="#m-tunnel"/></svg><svg><use href="#m-pencil"/></svg><svg><use href="#m-extrude"/></svg><svg><use href="#m-arch"/></svg><svg><use href="#m-cyl"/></svg>
					</div>
				</div>
				<div class="mesh-group">
					<span class="key">W</span>
					<div class="mesh-icons">
						<svg><use href="#m-spheres"/></svg><svg><use href="#m-cloud"/></svg><svg><use href="#m-cloud2"/></svg><svg><use href="#m-split"/></svg><svg><use href="#m-split2"/></svg><svg><use href="#m-diam"/></svg><svg><use href="#m-drop"/></svg><svg><use href="#m-tri"/></svg>
						<svg><use href="#m-box"/></svg><svg><use href="#m-plane"/></svg><svg><use href="#m-red"/></svg>
					</div>
				</div>
				<div class="mesh-group last">
					<span class="key">E</span>
					<div class="mesh-icons">
						<svg><use href="#m-to-grid"/></svg><svg><use href="#m-check"/></svg><svg><use href="#m-cube"/></svg><svg><use href="#m-to-tri"/></svg><svg><use href="#m-diag"/></svg><svg><use href="#m-bowl"/></svg>
					</div>
				</div>
			</div>
			<div class="section"><svg><use href="#s-feature"/></svg><span>Feature Modeling</span><i class="chev"></i></div>
			<div class="section"><svg><use href="#s-viz"/></svg><span>Visualization</span><i class="chev"></i></div>
			<div class="section"><svg><use href="#s-anim"/></svg><span>Animation</span><i class="chev"></i></div>
		</aside>

		<div class="splitter"></div>

		<section class="view">
			<div class="view-title">
				<svg class="ic16" viewBox="0 0 20 20"><rect x="1" y="1" width="18" height="18" rx="2" fill="#eaf2fa"/><path d="M5 8l4-4h7v8l-4 4H5z" fill="#1d8ee8"/><path d="M5 8h7v8M12 8l4-4" fill="none" stroke="#bfe4ff"/></svg>
				<span>View 1, Default</span>
				<div class="winbtns">
					<button class="wbtn"><svg><use href="#w-min"/></svg></button>
					<button class="wbtn"><svg><use href="#w-max"/></svg></button>
					<button class="wbtn wbtn-red"><svg><use href="#w-close"/></svg></button>
				</div>
			</div>
			<div class="view-tools">
				<i class="vt"><svg><use href="#v-list"/></svg></i><b class="arrow va"></b>
				<i class="vt more"><svg><use href="#v-link"/></svg></i>
				<i class="vt"><svg><use href="#v-sun"/></svg></i><b class="arrow va"></b>
				<i class="sep"></i>
				<i class="vt"><svg><use href="#v-brush"/></svg></i>
				<i class="vt"><svg><use href="#v-in"/></svg></i>
				<i class="vt"><svg><use href="#v-out"/></svg></i>
				<i class="vt"><svg><use href="#v-window"/></svg></i>
				<i class="vt"><svg><use href="#v-fit"/></svg></i>
				<i class="vt on more"><svg><use href="#v-rotate"/></svg></i>
				<i class="vt"><svg><use href="#v-hand"/></svg></i>
				<i class="sep"></i>
				<i class="vt"><svg><use href="#v-feet"/></svg></i>
				<i class="vt"><svg><use href="#v-prev"/></svg></i>
				<i class="vt"><svg><use href="#v-next"/></svg></i>
				<i class="sep"></i>
				<i class="vt"><svg><use href="#v-copy"/></svg></i>
				<i class="vt more"><svg><use href="#v-clip"/></svg></i>
				<i class="vt on-dark more"><svg><use href="#v-scan"/></svg></i>
			</div>
			<div class="view-body">
				<canvas id="cloud" width="1281" height="638"></canvas>
			</div>

			<div class="float terrascan">
				<div class="float-title">
					<svg class="ic18"><use href="#logo"/></svg>
					<span>TerraScan - 7 316 615 points</span>
					<div class="winbtns">
						<button class="wbtn"><svg><use href="#w-min"/></svg></button>
						<button class="wbtn"><svg><use href="#w-max"/></svg></button>
						<button class="wbtn"><svg><use href="#w-close"/></svg></button>
					</div>
				</div>
				<div class="float-menu">
					<a><u>F</u>ile</a><a><u>O</u>utput</a><a><u>P</u>oint</a><a><u>V</u>iew</a><a><u>C</u>lassify</a><a><u>T</u>ools</a><a><u>F</u>lightline</a>
				</div>
			</div>

			<div class="float toolbox">
				<div class="toolbox-title"><span>TerraScan</span><i class="tiny-close"><svg viewBox="0 0 16 10"><use href="#w-close"/></svg></i></div>
				<div class="toolbox-body">
					<i class="tbx more"><svg><use href="#ts-tree"/></svg></i><i class="tbx more"><svg><use href="#ts-aa"/></svg></i>
					<i class="tbx more"><svg><use href="#ts-down"/></svg></i><i class="tbx more"><svg><use href="#ts-bow"/></svg></i>
					<i class="tbx more"><svg><use href="#ts-line"/></svg></i><i class="tbx more"><svg><use href="#ts-block"/></svg></i>
					<i class="tbx more"><svg><use href="#ts-table"/></svg></i>
				</div>
			</div>

			<div class="float rotate">
				<div class="float-title rotate-title">
					<svg class="ic18"><use href="#x-hand"/></svg>
					<span>Rotate View</span>
					<div class="winbtns">
						<button class="wbtn"><svg><use href="#w-min"/></svg></button>
						<button class="wbtn"><svg><use href="#w-max"/></svg></button>
						<button class="wbtn"><svg><use href="#w-close"/></svg></button>
					</div>
				</div>
				<div class="rotate-body">
					<label class="method"><u>M</u>ethod:</label>
					<div class="combo combo-small">Dynamic<b class="arrow"></b></div>
					<b class="arrow rotate-more"></b>
				</div>
			</div>
		</section>
	</div>

	<div class="bottombar">
		<i class="grip"></i>
		<svg class="ic22"><use href="#b-back"/></svg><b class="arrow gray"></b>
		<svg class="ic22"><use href="#b-next"/></svg><b class="arrow gray"></b>
		<svg class="ic24"><use href="#b-dial"/></svg><b class="arrow gray"></b>
		<div class="combo combo-views"><svg class="ic16" viewBox="0 0 20 16"><use href="#b-views"/></svg><span>Default Views</span><b class="arrow"></b></div>
		<i class="sep tall"></i>
		<svg class="views-btn" viewBox="0 0 20 16"><use href="#b-views"/></svg>
		<i class="sep tall"></i>
		<div class="numbers">
			<a class="on">1</a><a>2</a><a>3</a><a>4</a><a>5</a><a>6</a><a>7</a><a>8</a>
		</div>
		<i class="grip grip-mid"></i>
		<svg class="ic14 f1"><use href="#b-cal"/></svg>
		<input class="field" value="0.0" readonly>
		<i class="sep tall f2"></i>
		<svg class="ic14 f3"><use href="#b-angle"/></svg>
		<input class="field" value="0.0000°" readonly>
		<i class="sep tall f4"></i>
		<b class="zed">Z</b>
		<input class="field" value="27.8" readonly>
	</div>

	<footer class="status">
		<div class="st st-empty"></div>
		<div class="st st-box"></div>
		<div class="st st-msg">Classified 0 points.</div>
		<div class="st st-ico"><svg><use href="#st-snap"/></svg></div>
		<div class="st st-ico"><svg><use href="#st-lock"/></svg></div>
		<div class="st st-name">Default</div>
		<div class="st st-wide"></div>
		<div class="st st-ico"></div>
		<div class="st st-ico"></div>
		<div class="st st-ico"></div>
		<div class="st st-ico"><svg><use href="#st-scroll"/></svg></div>
		<div class="st st-ico"><svg><use href="#st-home"/></svg></div>
		<div class="st st-ico"></div>
	</footer>
</div>

<div class="taskbar">
	<div class="start">
		<svg viewBox="0 0 38 38" class="orb">
			<defs><radialGradient id="orbfill" cx=".5" cy=".35" r=".7"><stop offset="0" stop-color="#7fc4ee"/><stop offset=".6" stop-color="#1c6aa8"/><stop offset="1" stop-color="#0c3a6a"/></radialGradient></defs>
			<circle cx="19" cy="19" r="18" fill="url(#orbfill)" stroke="#17385c"/>
			<path d="M9 12l9-2v8l-9 1z" fill="#e8502a"/><path d="M20 10l9 0-1 8-8 0z" fill="#8cc63e"/><path d="M9 21l9-1v8l-10-1z" fill="#3a9ae0"/><path d="M20 20h8l-1 8-7 1z" fill="#f4c228"/>
		</svg>
	</div>
	<div class="task-btn"><svg viewBox="0 0 36 34"><use href="#x-folder"/></svg></div>
	<div class="task-btn bright"><svg viewBox="0 0 30 30"><use href="#x-chrome"/></svg></div>
	<div class="task-btn"><svg viewBox="0 0 24 24"><use href="#logo"/></svg></div>
	<div class="tray">
		<b class="tray-up"></b>
		<svg><use href="#x-flag"/></svg><svg><use href="#x-net"/></svg><svg><use href="#x-sound"/></svg>
		<div class="clock"><span>01:44 PM</span><span>2012/04/23</span></div>
	</div>
	<div class="show-desktop"></div>
</div>
<div class="behind"></div>

<script src="cloud.js"></script>
</body>
</html>
```

FILE: styles.css
```css
* {
	box-sizing: border-box;
}

html, body {
	margin: 0;
	height: 100%;
}

body {
	position: relative;
	width: 1602px;
	height: 899px;
	overflow: hidden;
	background-color: #c9dbee;
	color: #111;
	font-family: Roboto, "Liberation Sans", sans-serif;
	font-size: 12px;
}

.sprite {
	display: none;
}

svg {
	display: block;
	flex: none;
}

i, b, em {
	font-style: normal;
	font-weight: normal;
}

.ic14 { width: 14px; height: 14px; }
.ic16 { width: 16px; height: 16px; }
.ic18 { width: 18px; height: 18px; }
.ic22 { width: 22px; height: 22px; }
.ic24 { width: 24px; height: 24px; }
.ic26 { width: 26px; height: 24px; }

.app {
	display: flex;
	flex-direction: column;
	height: 859px;
	padding: 0 9px 6px 8px;
	border-bottom: 1px solid #46586c;
	background: #cfe0f1;
}

/* title bar */
.titlebar {
	display: flex;
	align-items: center;
	height: 29px;
	margin: 0 -9px 0 -8px;
	padding: 6px 11px 0 9px;
	background: linear-gradient(#bac9d9, #d5e3f2);
	color: #3f4c5c;
	font-size: 11.900px;
}

.title-logo {
	width: 18px;
	height: 18px;
	margin-right: 3px;
}

.winbtns {
	display: flex;
	gap: 2px;
	margin-left: auto;
}

.wbtn {
	display: flex;
	align-items: center;
	justify-content: center;
	width: 31px;
	height: 18px;
	padding: 0;
	border: 1px solid #7188a3;
	border-radius: 3px;
	background: linear-gradient(#d7e3ef, #bccfe1);
}

.wbtn svg {
	width: 16px;
	height: 10px;
}

.wbtn-red {
	border-color: #5c2430;
	background: linear-gradient(#e09a90, #c9604f 55%, #b0402f);
}

/* menu */
.menubar {
	display: flex;
	align-items: center;
	gap: 14.500px;
	height: 26px;
	padding: 1px 0 0 17px;
	background: #f0f0f0;
	font-size: 12px;
}

.grip {
	display: block;
	flex: none;
	width: 3px;
	height: 22px;
	background: repeating-linear-gradient(#9a9a9a 0 2px, transparent 2px 4px);
}

.menu-grip {
	height: 8px;
	margin: 0 -6px 0 -14px;
}

/* toolbars */
.toolrow {
	display: flex;
	gap: 3px;
	height: 33px;
	background: #f0f0f0;
}

.toolbar {
	display: flex;
	align-items: center;
	height: 33px;
	border-radius: 5px;
	background: linear-gradient(#f8f8f8, #ececec 40%, #c9c9c9);
}

.toolbar .grip {
	margin-left: 2px;
}

.tb-attrs {
	width: 548px;
}

.tb-tools {
	width: 481px;
}

.arrow {
	display: block;
	flex: none;
	width: 0;
	height: 0;
	border-style: solid;
	border-width: 4px 4px 0;
	border-color: #1c1c1c transparent transparent;
}

.arrow.gray {
	border-top-color: #8a8a8a;
}

.attr-first {
	display: flex;
	align-items: center;
	width: 55px;
	height: 33px;
	padding-left: 4px;
	border-right: 1px solid #a8a8a8;
}

.attr-first .arrow {
	margin-left: 8px;
}

.attr-combo {
	display: flex;
	align-items: center;
	width: 137px;
	height: 33px;
	padding-left: 4px;
	border-right: 1px solid #a8a8a8;
}

.combo {
	display: flex;
	align-items: center;
	justify-content: space-between;
	height: 22px;
	padding: 0 8px 0 2px;
	border: 1px solid #7a7a7a;
	border-radius: 4px;
	background: linear-gradient(#f6f6f6, #e6e6e6 45%, #c4c4c4);
	font-size: 11px;
}

.attr-combo .combo {
	width: 128px;
}

.attr {
	display: flex;
	align-items: center;
	width: 71px;
	height: 33px;
	padding-left: 5px;
	border-right: 1px solid #a8a8a8;
}

.attr span {
	width: 22px;
	color: #333;
	font-size: 12px;
	text-align: center;
}

.attr .arrow {
	margin-left: 5px;
}

.attr:last-child {
	border-right: none;
}

.attr-off span {
	color: #999;
}

.attr-off .arrow {
	border-top-color: #8a8a8a;
}

.slot {
	display: flex;
	align-items: center;
	width: 43px;
}

.slot .arrow {
	margin-left: 6px;
}

.tb-tools .grip {
	margin-right: 4px;
}

.tail {
	margin-right: 4px;
}

/* workspace */
.workspace {
	display: flex;
	flex: 1;
	min-height: 0;
}

.tasks {
	display: flex;
	flex-direction: column;
	width: 285px;
	padding: 0 3px;
	background: #f0f0f0;
	border-top: 1px solid #9ba9b8;
}

.tasks-head {
	display: flex;
	align-items: center;
	gap: 4px;
	height: 22px;
	margin: 0 -3px;
	padding: 0 5px 0 3px;
	background: linear-gradient(#b9cadd, #d8e6f4);
	color: #444f5c;
	font-size: 11.500px;
}

.tasks-head span {
	margin-right: auto;
}

.pin {
	width: 14px;
	height: 14px;
}

.tasks-combo {
	display: flex;
	align-items: center;
	gap: 2px;
	height: 24px;
	margin: 3px 1px 6px 2px;
	padding-left: 3px;
	border: 1px solid #8e8e8e;
	border-bottom-color: #666;
	border-radius: 4px 4px 0 0;
	background: #fff;
	font-size: 12px;
	letter-spacing: .5px;
}

.combo-drop {
	display: flex;
	align-items: center;
	justify-content: center;
	width: 24px;
	height: 100%;
	margin-left: auto;
	border-left: 1px solid #bbb;
}

.task-row {
	display: flex;
	height: 34px;
	margin: 0 1px 5px 1px;
	padding-left: 5px;
	border-radius: 4px;
	background: #fff;
}

.task {
	position: relative;
	width: 28px;
	height: 34px;
}

.task svg {
	width: 20px;
	height: 24px;
	margin: 4px 0 0 8px;
}

.task em {
	position: absolute;
	left: 0;
	bottom: 3px;
	width: 11px;
	height: 15px;
	border-right: 1px solid #444;
	border-bottom: 1px solid #444;
	color: #888;
	font-size: 13px;
	line-height: 14px;
	text-align: center;
}

.task.more::after, .vt.more::after, .tbx.more::after {
	content: "";
	position: absolute;
	right: 1px;
	bottom: 3px;
	border-style: solid;
	border-width: 3px 0 3px 3px;
	border-color: transparent transparent transparent #111;
}

.task.on {
	background: linear-gradient(#fde9b8, #fbb85c);
	outline: 1px solid #102a8a;
	outline-offset: -1px;
}

.section {
	display: flex;
	align-items: center;
	height: 24px;
	margin-bottom: 4px;
	padding: 0 6px 0 4px;
	border: 1px solid #a2a2a2;
	border-radius: 5px;
	background: linear-gradient(#f1f1f1, #e6e6e6 45%, #c8c8c8);
	color: #15152a;
	font-size: 12px;
	letter-spacing: .35px;
}

.section > svg:first-child {
	width: 18px;
	height: 18px;
	margin-right: 4px;
}

.section .sec-chart {
	width: 18px;
	height: 18px;
	margin-left: auto;
}

.chev {
	position: relative;
	display: block;
	width: 10px;
	height: 10px;
	margin-left: auto;
	margin-right: 2px;
}

.chev::before, .chev::after {
	content: "";
	position: absolute;
	left: 1px;
	width: 6px;
	height: 6px;
	border-right: 2px solid #3c3c3c;
	border-bottom: 2px solid #3c3c3c;
	transform: rotate(45deg);
}

.chev::before { top: -2px; }
.chev::after { top: 2px; }

.chev.up::before, .chev.up::after {
	transform: rotate(225deg);
}

.chev.up::after { display: none; }
.chev.up::before { top: 3px; }

.section.open {
	height: 22px;
	margin-bottom: 0;
	padding-left: 5px;
	border: none;
	border-radius: 4px 4px 0 0;
	background: linear-gradient(#eaf6fd, #b5defb);
	font-weight: bold;
	letter-spacing: .85px;
}

.modes {
	display: flex;
	align-items: center;
	gap: 4px;
	margin-left: auto;
}

.modes i {
	display: block;
	width: 14px;
	height: 13px;
}

.mode-grid {
	background:
		linear-gradient(#d8eefc, #d8eefc) center / 100% 1px no-repeat,
		linear-gradient(#d8eefc, #d8eefc) center / 1px 100% no-repeat,
		#3c3c3c;
}

.mode-list {
	background: repeating-linear-gradient(#3c3c3c 0 3px, transparent 3px 5px);
}

.mode-big {
	background: linear-gradient(#3c3c3c 45%, transparent 45% 58%, #3c3c3c 58%);
	outline: 1px solid #fff;
}

.section.open .chev {
	margin-left: 6px;
}

.mesh-card {
	display: flex;
	flex-direction: column;
	margin-bottom: 5px;
	padding: 5px 6px 5px 6px;
	border-radius: 0 0 4px 4px;
	background: #fff;
	border: 1px solid #dcecf8;
	border-top: none;
}

.mesh-group {
	display: flex;
	gap: 1px;
	padding-bottom: 2px;
	border-bottom: 1px solid #b0b0b0;
}

.mesh-group.last {
	padding-bottom: 0;
	border-bottom: none;
}

.key {
	display: flex;
	align-items: center;
	justify-content: center;
	width: 15px;
	background: linear-gradient(90deg, #eee, #c4c4c4);
	color: #888;
	font-size: 12px;
}

.mesh-icons {
	display: grid;
	grid-template-columns: repeat(8, 28px);
	grid-auto-rows: 27px;
}

.mesh-icons svg {
	width: 26px;
	height: 26px;
}

.splitter {
	width: 4px;
	background: #b4b6da;
}

.view {
	position: relative;
	display: flex;
	flex-direction: column;
	flex: 1;
	min-width: 0;
	padding: 0 6px 7px 8px;
	border-top: 4px solid #555;
	border-image: linear-gradient(#969696 75%, #222 75%) 4 0 0 0;
	background: #bcd4ef;
	box-shadow: inset 0 -1px 0 #3cd0e6, inset -1px 0 0 #3cd0e6;
}

.view-title {
	display: flex;
	align-items: center;
	gap: 6px;
	height: 30px;
	margin: 0 -6px 0 -8px;
	padding: 6px 8px 0 8px;
	background: linear-gradient(#99b4d2, #b2c9e3);
	color: #1f2730;
	font-size: 13px;
	letter-spacing: .2px;
}

.view-title .wbtn {
	border-color: #5c7494;
}

.view-tools {
	display: flex;
	align-items: center;
	height: 24px;
	background: #f0f0f0;
}

.vt {
	position: relative;
	display: flex;
	align-items: center;
	justify-content: center;
	width: 22px;
	height: 24px;
}

.vt svg {
	width: 18px;
	height: 18px;
}

.va {
	margin: 0 4px;
}

.vt.on {
	background: linear-gradient(#fde9b8, #fbb85c);
	outline: 1px solid #2a62c8;
	outline-offset: -1px;
}

.vt.on-dark {
	background: linear-gradient(#fde9b8, #fbb85c);
	outline: 1px solid #10105a;
	outline-offset: -1px;
}

.sep {
	display: block;
	flex: none;
	width: 1px;
	height: 22px;
	margin: 0 3px;
	background: #a8a8a8;
}

.va + .sep {
	margin-left: 0;
}

.view-body {
	flex: 1;
	min-height: 0;
	background: #000;
}

#cloud {
	display: block;
}

/* floating windows */
.float {
	position: absolute;
	border: 1px solid #5f6f82;
	background: #f0f0f0;
}

.terrascan {
	left: 413px;
	top: 22px;
	width: 473px;
	height: 48px;
	border-radius: 5px 5px 0 0;
}

.float-title {
	display: flex;
	align-items: center;
	gap: 5px;
	height: 23px;
	padding: 0 4px 0 4px;
	background: linear-gradient(#bfcfe0, #d4e3f3);
	color: #3f4c5c;
	font-size: 11.600px;
}

.float-title .winbtns {
	gap: 4px;
}

.float-title .wbtn {
	width: 29px;
}

.float-menu {
	display: flex;
	gap: 14.700px;
	height: 19px;
	padding: 0 0 0 14px;
	border-bottom: 1px solid #a8a8a8;
	font-size: 12px;
	line-height: 17px;
}

.toolbox {
	left: 50px;
	top: 132px;
	width: 84px;
	height: 151px;
	padding: 1px 2px 2px;
	border-color: #6e6e6e;
	background: #d6e4f2;
}

.toolbox-title {
	display: flex;
	align-items: center;
	justify-content: space-between;
	height: 19px;
	padding: 0 2px 0 0;
	color: #3f4c5c;
	font-size: 12px;
}

.tiny-close {
	display: flex;
	align-items: center;
	justify-content: center;
	width: 13px;
	height: 13px;
	border: 1px solid #7188a3;
	border-radius: 2px;
}

.tiny-close svg {
	width: 9px;
	height: 7px;
}

.toolbox-body {
	display: grid;
	grid-template-columns: 28px 28px;
	grid-auto-rows: 28px;
	height: 128px;
	padding-top: 2px;
	border-radius: 0 0 4px 0;
	background: linear-gradient(90deg, #f2f2f2 0 54px, #e8e8e8 54px, #bfbfbf);
}

.tbx {
	position: relative;
	display: block;
}

.tbx svg {
	width: 24px;
	height: 24px;
	margin: 1px 0 0 1px;
}

.rotate {
	left: 12px;
	top: 316px;
	width: 207px;
	height: 82px;
	border-radius: 5px 5px 0 0;
}

.rotate-title {
	gap: 3px;
	height: 23px;
	padding-right: 4px;
	color: #53606e;
}

.rotate-title .winbtns {
	gap: 2px;
}

.rotate-title .wbtn {
	width: 31px;
}

.rotate-body {
	position: relative;
	display: flex;
	align-items: flex-start;
	gap: 3px;
	padding: 7px 0 0 7px;
	border: 1px solid #d6e4f2;
	border-top: none;
	height: 58px;
}

.method {
	height: 16px;
	padding: 0 1px;
	outline: 1px dotted #000;
	font-size: 11.500px;
	line-height: 15px;
}

.combo-small {
	width: 102px;
	height: 15px;
}

.rotate-more {
	position: absolute;
	left: 175px;
	top: 25px;
	border-width: 5px 5px 0;
}

/* bottom toolbar */
.bottombar {
	display: flex;
	align-items: center;
	height: 34px;
	background: linear-gradient(90deg, transparent 787px, #f0f0f0 787px), linear-gradient(#f6f6f6, #ececec 40%, #c8c8c8);
}

.bottombar .grip {
	margin: 0 6px 0 2px;
}

.bottombar .arrow {
	margin: 0 6px;
}

.combo-views {
	width: 128px;
	height: 20px;
	margin-left: -1px;
	padding: 0 6px 0 3px;
}

.combo-views span {
	flex: 1;
	margin-left: 4px;
}

.bottombar .combo-views .arrow {
	margin: 0;
}

.sep.tall {
	height: 34px;
	margin: 0 4px;
}

.views-btn {
	width: 22px;
	height: 18px;
	margin: 0 2px;
}

.numbers {
	display: flex;
	margin-left: -2px;
}

.numbers a {
	width: 14px;
	height: 21px;
	border-right: 2px solid #333;
	background: linear-gradient(#fbfbfb, #cfcfcf);
	font-size: 12px;
	line-height: 20px;
	text-align: center;
}

.numbers a.on {
	background: linear-gradient(#fdd58a, #fbe9a8);
	border-right-color: #eee;
}

.bottombar .grip-mid {
	margin: 0 3px 0 6px;
}

.field {
	width: 91px;
	height: 17px;
	padding: 0 2px;
	border: 1px solid #a8a8a8;
	background: #fff;
	color: #777;
	font: 11.500px Roboto, sans-serif;
}

.f1 { margin-right: 5px; }
.sep.tall.f2 { margin-left: 3px; margin-right: 6px; }
.f3 { margin-right: 6px; }
.sep.tall.f4 { margin-left: 4px; margin-right: 7px; }

.zed {
	width: 17px;
	font-size: 16px;
	font-weight: bold;
	color: #222;
}

/* status bar */
.status {
	display: flex;
	height: 26px;
	background: #f0f0f0;
	border-top: 1px solid #a8a8a8;
}

.st {
	display: flex;
	align-items: center;
	flex: none;
	height: 25px;
	border-left: 1px solid #c8c8c8;
	font-size: 12px;
}

.st-empty { width: 400px; border-left: none; }
.st-box { width: 27px; margin-top: 1px; height: 23px; border: 1px solid #c8c8c8; }
.st-msg { width: 712px; border-left: none; padding-left: 1px; }
.st-ico { width: 28px; justify-content: center; }
.st-ico svg { width: 16px; height: 16px; }
.st-name { width: 117px; padding-left: 2px; }
.st-wide { width: 104px; }

/* taskbar */
.taskbar {
	display: flex;
	align-items: center;
	height: 40px;
	background: #a6bfdb;
}

.start {
	width: 60px;
	height: 40px;
	padding: 2px 0 0 9px;
	background: linear-gradient(90deg, #7b92ac, #8aa2bd 70%, #a6bfdb);
}

.orb {
	width: 36px;
	height: 36px;
}

.task-btn {
	display: flex;
	align-items: center;
	justify-content: center;
	width: 59px;
	height: 38px;
	margin-right: 3px;
	border: 1px solid #506680;
	border-radius: 3px;
	background: linear-gradient(135deg, #c0d3e6, #a8c0da);
}

.task-btn svg {
	width: 32px;
	height: 32px;
}

.task-btn.bright {
	background: linear-gradient(135deg, #d6e3ef, #bcd0e4);
	border-color: #6a7e96;
}

.tray {
	display: flex;
	align-items: center;
	gap: 5px;
	width: 218px;
	height: 40px;
	margin-left: auto;
	padding-left: 36px;
	background: linear-gradient(90deg, #a6bfdb, #6f87a2 30%);
	color: #fff;
}

.tray svg {
	width: 16px;
	height: 18px;
}

.tray-up {
	display: block;
	width: 0;
	height: 0;
	margin-right: 13px;
	border-style: solid;
	border-width: 0 4px 4px;
	border-color: transparent transparent #eef2f6;
}

.clock {
	display: flex;
	flex-direction: column;
	align-items: center;
	gap: 3px;
	width: 86px;
	margin-left: 2px;
	font-size: 12px;
}

.show-desktop {
	width: 10px;
	height: 40px;
	border: 1px solid #41505f;
	background: linear-gradient(#7a8794, #5c6a78);
}

/* other window peeking out at the right edge */
.behind {
	position: absolute;
	top: 0;
	right: 0;
	width: 2px;
	height: 320px;
	background: linear-gradient(#2a6fc0 0 60px, #1c1c1c 60px 90px, #b8cce0 90px 270px, #c02020 270px 300px, #b8cce0 300px);
}
```

FILE: cloud.js
```js
// point cloud in the view, coordinates are page pixels
const canvas = document.getElementById('cloud');
const ctx = canvas.getContext('2d');
const ox = 305, oy = 146;

let seed = 20120423;
function rnd() {
	seed = (seed + 0x6D2B79F5) | 0;
	let t = Math.imul(seed ^ (seed >>> 15), 1 | seed);
	t = (t + Math.imul(t ^ (t >>> 7), 61 | t)) ^ t;
	return ((t ^ (t >>> 14)) >>> 0) / 4294967296;
}

function inside(p, x, y) {
	let c = false;
	for (let i = 0, j = p.length - 1; i < p.length; j = i++) {
		if ((p[i][1] > y) !== (p[j][1] > y) &&
			x < (p[j][0] - p[i][0]) * (y - p[i][1]) / (p[j][1] - p[i][1]) + p[i][0]) c = !c;
	}
	return c;
}

// patchy density, so the points clump the way foliage does
const cells = new Map();
function patch(x, y) {
	const key = (x >> 3) + ',' + (y >> 2);
	if (!cells.has(key)) {
		const v = rnd();
		cells.set(key, v * v * 3);
	}
	return cells.get(key);
}

function fill(p, density, jitter, lumpy) {
	const xs = p.map(a => a[0]), ys = p.map(a => a[1]);
	const x0 = Math.min(...xs) - jitter, x1 = Math.max(...xs) + jitter;
	const y0 = Math.min(...ys) - jitter, y1 = Math.max(...ys) + jitter;
	for (let y = y0; y <= y1; y++) {
		for (let x = x0; x <= x1; x++) {
			const d = lumpy ? density * patch(x, y) : density;
			if (rnd() < d) {
				const jx = jitter * (rnd() - rnd()), jy = jitter * (rnd() - rnd());
				if (inside(p, x + jx, y + jy)) {
					ctx.fillRect(x - ox, y - oy, rnd() < .35 ? 2 : 1, rnd() < .25 ? 2 : 1);
				}
			}
		}
	}
}

ctx.fillStyle = '#000';
ctx.fillRect(0, 0, canvas.width, canvas.height);
ctx.fillStyle = '#fff';

// trees and sparse scatter: polygon, density, edge jitter
const scatter = [
	[[[516, 424], [540, 430], [575, 455], [574, 480], [560, 490], [530, 470]], .2, 8],
	[[[585, 490], [622, 488], [618, 540], [590, 560], [582, 510]], .14, 8],
	[[[622, 490], [665, 490], [667, 516], [621, 516]], .35, 4],
	[[[743, 458], [760, 465], [786, 480], [780, 490], [755, 480]], .32, 6],
	[[[917, 428], [945, 430], [968, 450], [996, 475], [986, 503], [960, 500], [930, 490], [908, 465]], .27, 10],
	[[[1013, 440], [1040, 432], [1072, 450], [1084, 490], [1078, 515], [1050, 510], [1030, 490], [1014, 470]], .22, 12],
	[[[1040, 520], [1075, 525], [1085, 545], [1060, 550]], .2, 6],
	[[[1074, 520], [1107, 520], [1107, 558], [1074, 560]], .4, 6],
	[[[1161, 505], [1207, 515], [1208, 555], [1185, 570], [1165, 560]], .42, 8],
	[[[1207, 517], [1273, 517], [1262, 565], [1207, 565]], .08, 10],
	[[[1270, 525], [1295, 490], [1318, 505], [1320, 540], [1280, 560]], .17, 12],
	[[[1130, 515], [1165, 510], [1165, 545], [1135, 545]], .16, 6],
	[[[1392, 485], [1420, 470], [1452, 478], [1457, 515], [1430, 538], [1400, 530]], .09, 12],
	[[[1390, 425], [1510, 425], [1510, 530], [1455, 530], [1455, 470], [1390, 470]], .004, 8],
	[[[321, 543], [334, 543], [345, 567], [330, 567]], .11, 4],
	[[[337, 560], [440, 560], [445, 573], [345, 575]], .04, 6],
	[[[405, 584], [507, 582], [507, 589], [405, 590]], .08, 3],
	[[[424, 490], [453, 490], [453, 498], [424, 498]], .09, 4],
	[[[839, 523], [857, 523], [857, 532], [839, 532]], .38, 3],
	[[[812, 525], [833, 525], [833, 532], [812, 532]], .3, 3],
	[[[888, 522], [913, 522], [913, 538], [888, 538]], .2, 4],
	[[[1120, 505], [1165, 495], [1230, 510], [1230, 530], [1130, 530]], .035, 8]
];
scatter.forEach(s => fill(s[0], s[1], s[2], true));

// solid parts
const solid = [
	[[546, 503], [552, 496], [560, 497], [565, 506], [566, 557], [546, 557]],
	[[569, 545], [574, 541], [580, 546], [582, 577], [570, 577]],
	[[668, 495], [680, 489], [700, 486], [720, 486], [728, 490], [731, 520], [733, 545], [665, 548], [662, 530]],
	[[742, 511], [747, 512], [752, 525], [762, 540], [763, 549], [735, 549], [740, 530]],
	[[773, 493], [785, 500], [808, 503], [812, 510], [812, 550], [770, 550], [776, 520]],
	[[905, 496], [915, 492], [924, 500], [922, 515], [918, 527], [908, 512]],
	[[1116, 525], [1130, 517], [1148, 522], [1150, 560], [1115, 560]]
];
solid.forEach(p => fill(p, .97, 3, false));
fill([[1085, 545], [1096, 515], [1106, 520], [1106, 556], [1085, 558]], .55, 4, false);

// ground
fill([[560, 555], [600, 553], [640, 556], [700, 549], [740, 549], [790, 546], [812, 552], [850, 557],
	[900, 560], [950, 550], [1000, 553], [1075, 552], [1110, 552], [1157, 543], [1157, 557], [1074, 563],
	[1004, 570], [950, 578], [889, 567], [839, 563], [789, 553], [739, 554], [694, 563], [644, 580],
	[582, 577], [590, 560]], .62, 4, false);
fill([[950, 545], [1000, 548], [1004, 563], [950, 575]], .5, 4, false);

// door opening
ctx.fillStyle = '#000';
ctx.fillRect(621 - ox, 518 - oy, 39, 35);
ctx.fillStyle = '#fff';
ctx.fillRect(620 - ox, 515 - oy, 2, 38);

// little black hole in the wall
ctx.fillStyle = '#000';
ctx.fillRect(704 - ox, 515 - oy, 4, 6);
ctx.fillRect(710 - ox, 515 - oy, 3, 6);
ctx.fillStyle = '#fff';

// crosshair
ctx.fillRect(945 - ox, 428 - oy, 1, 75);
ctx.fillRect(908 - ox, 463 - oy, 77, 1);
```
